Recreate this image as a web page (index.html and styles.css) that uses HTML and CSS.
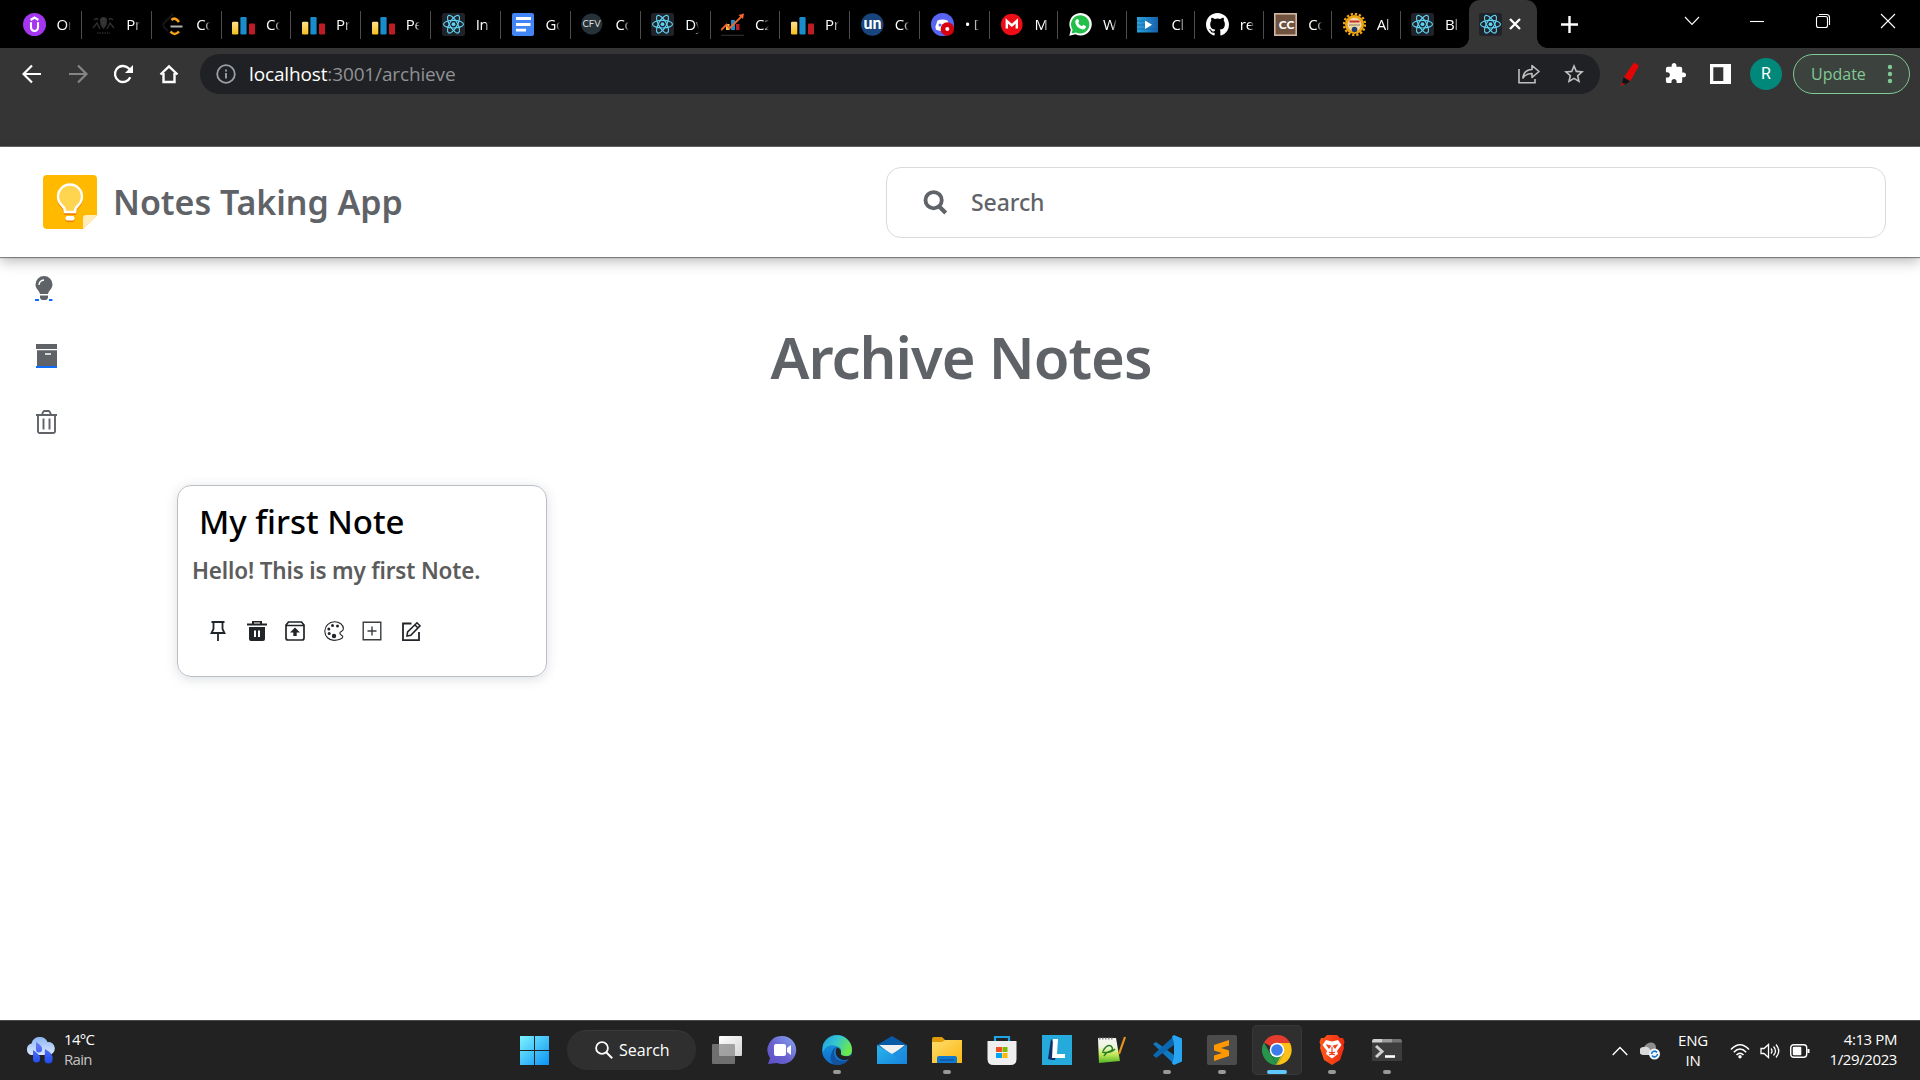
FILE: index.html
```html
<!DOCTYPE html>
<html lang="en">
<head>
<meta charset="utf-8">
<title>Notes Taking App</title>
<link rel="stylesheet" href="styles.css">
</head>
<body>
<svg class="defs" aria-hidden="true">
  <defs>
    <linearGradient id="g-yellow" x1="0" y1="0" x2="0" y2="1"><stop offset="0" stop-color="#ffe08a"/><stop offset="1" stop-color="#f5bd1f"/></linearGradient>
    <linearGradient id="g-win" x1="0" y1="0" x2="1" y2="1"><stop offset="0" stop-color="#7df3ff"/><stop offset="1" stop-color="#0a93f5"/></linearGradient>
    <linearGradient id="g-cloud" x1="0" y1="0" x2="0" y2="1"><stop offset="0" stop-color="#8db5f5"/><stop offset="1" stop-color="#dbe7fb"/></linearGradient>
    <linearGradient id="g-drop" x1="0" y1="0" x2="0" y2="1"><stop offset="0" stop-color="#6a7df5"/><stop offset="1" stop-color="#1d4df0"/></linearGradient>
    <linearGradient id="g-task" x1="0" y1="0" x2="1" y2="1"><stop offset="0" stop-color="#fff"/><stop offset="1" stop-color="#d4d4d4"/></linearGradient>
    <linearGradient id="g-chat" x1="0" y1="1" x2="1" y2="0"><stop offset="0" stop-color="#5b50c8"/><stop offset=".45" stop-color="#6b62cf"/><stop offset="1" stop-color="#86a6f2"/></linearGradient>
    <linearGradient id="g-edge" x1="0" y1="0" x2="1" y2=".4"><stop offset="0" stop-color="#1c9fe0"/><stop offset=".5" stop-color="#35c6d0"/><stop offset="1" stop-color="#6be84a"/></linearGradient>
    <linearGradient id="g-edge2" x1="0" y1="0" x2="0" y2="1"><stop offset="0" stop-color="#1ba0e6"/><stop offset="1" stop-color="#0c6bc9"/></linearGradient>
    <linearGradient id="g-mail" x1="0" y1="0" x2="1" y2="1"><stop offset="0" stop-color="#2bb6ec"/><stop offset="1" stop-color="#1583dc"/></linearGradient>
    <linearGradient id="g-folder" x1="0" y1="0" x2="1" y2="1"><stop offset="0" stop-color="#ffdc6e"/><stop offset="1" stop-color="#fbb70f"/></linearGradient>
    <linearGradient id="g-brave" x1="0" y1="0" x2="1" y2="0"><stop offset="0" stop-color="#ff5a1a"/><stop offset="1" stop-color="#f02a12"/></linearGradient>
    <linearGradient id="g-npp" x1="0" y1="0" x2="0" y2="1"><stop offset="0" stop-color="#f6f6f4"/><stop offset=".35" stop-color="#eef5df"/><stop offset=".65" stop-color="#c3e85a"/><stop offset="1" stop-color="#52b524"/></linearGradient>
    <linearGradient id="g-clip" x1="0" y1="0" x2="1" y2="0"><stop offset="0" stop-color="#29a4dd"/><stop offset="1" stop-color="#1660ae"/></linearGradient>
  </defs>
  <symbol id="react" viewBox="0 0 23 23"><rect width="23" height="23" rx="2.5" fill="#20232a"/><g fill="none" stroke="#5fd3f3" stroke-width="1.15"><ellipse cx="11.5" cy="11.2" rx="10" ry="3.8"/><ellipse cx="11.5" cy="11.2" rx="10" ry="3.8" transform="rotate(60 11.5 11.2)"/><ellipse cx="11.5" cy="11.2" rx="10" ry="3.8" transform="rotate(120 11.5 11.2)"/></g><circle cx="11.5" cy="11.2" r="1.9" fill="#5fd3f3"/></symbol>
  <symbol id="bars" viewBox="0 0 23 23"><rect y="8.8" width="6.3" height="12.7" rx="1.2" fill="url(#g-yellow)"/><rect x="8.4" y="4" width="6.2" height="17.5" rx="1.2" fill="#1b8ccb"/><rect x="17" y="10.5" width="6" height="11" rx="1.2" fill="#bd1c25"/></symbol>
</svg>

<header class="tabstrip">
  <div class="tab"><svg class="fav" viewBox="0 0 23 23"><circle cx="11.5" cy="11.5" r="11.5" fill="#a435f0"/><path d="M7.600 7l3.900-2.400L15.400 7M8 9.300v5.200a3.500 3.500 0 0 0 7 0V9.300" fill="none" stroke="#fff" stroke-width="2.100"/></svg><span class="tab-title">On</span></div>
  <div class="tab"><svg class="fav" viewBox="0 0 23 23"><path d="M8 6q3.500-4 7 0l-.5 6-3 4-3-4z" fill="#363636"/><path d="M8 8h7M9 11l2.500 2 2.500-2M2 7q3-3 4 0M21 7q-3-3-4 0M1 15l4-5 3 6M22 15l-4-5-3 6" fill="none" stroke="#303030" stroke-width="1.300"/><path d="M5 20h13" stroke="#2a2a2a" stroke-width="1.500" stroke-dasharray="1.500 1"/></svg><span class="tab-title">Pro</span></div>
  <div class="tab"><svg class="fav" viewBox="0 0 23 23"><path d="M11 1L2 10q-1.500 2 0 4l4 4" fill="none" stroke="#151515" stroke-width="2.200"/><path d="M9.500 7q3.500-3.500 7.500 2M8.500 18.500q4 5 8.500 0" fill="none" stroke="#f6a01c" stroke-width="2.600"/><path d="M8.500 13.500H20.500" stroke="#b3b3b3" stroke-width="2"/></svg><span class="tab-title">Co</span></div>
  <div class="tab"><svg class="fav"><use href="#bars"/></svg><span class="tab-title">Co</span></div>
  <div class="tab"><svg class="fav"><use href="#bars"/></svg><span class="tab-title">Pro</span></div>
  <div class="tab"><svg class="fav"><use href="#bars"/></svg><span class="tab-title">Pe</span></div>
  <div class="tab"><svg class="fav"><use href="#react"/></svg><span class="tab-title">Int</span></div>
  <div class="tab"><svg class="fav" viewBox="0 0 23 23"><rect width="22" height="23" rx="2" fill="#4285f4"/><path d="M4 5.500h15M4 11.500h14.500M4 17.200h10" stroke="#fff" stroke-width="2.800"/></svg><span class="tab-title">Go</span></div>
  <div class="tab"><svg class="fav" viewBox="0 0 23 23"><circle cx="10.800" cy="11" r="10.600" fill="#263238"/><text x="10.500" y="14.300" class="cfv">CFV</text></svg><span class="tab-title">Co</span></div>
  <div class="tab"><svg class="fav"><use href="#react"/></svg><span class="tab-title">Dy</span></div>
  <div class="tab"><svg class="fav" viewBox="0 0 23 23"><path d="M5 11h3.500v6H5z" fill="#f4c842"/><path d="M10 7h4v10h-4z" fill="#1b8ccb"/><path d="M15 11h3.500v6H15z" fill="#bd1c25"/><path d="M0 17l5.500-5.500 3 4L21 3" fill="none" stroke="#f2662f" stroke-width="1.800"/><path d="M17.500 2L23 .5l-1 5.500z" fill="#f2662f"/><path d="M0 22.300h23" stroke="#333"/></svg><span class="tab-title">C2</span></div>
  <div class="tab"><svg class="fav"><use href="#bars"/></svg><span class="tab-title">Pro</span></div>
  <div class="tab"><svg class="fav" viewBox="0 0 23 23"><circle cx="11.300" cy="11.500" r="11.300" fill="#18457b"/><text x="11.500" y="16.300" class="un">un</text></svg><span class="tab-title">Co</span></div>
  <div class="tab"><svg class="fav" viewBox="0 0 23 23"><circle cx="11.500" cy="11.500" r="11.500" fill="#5865f2"/><path d="M6.500 7.500q5-2.200 10 0l2.200 6-1 3.500-3.200.8h-6l-3.500-1-.6-3z" fill="#fff"/><circle cx="9" cy="12" r="1.500" fill="#5865f2"/><circle cx="16.300" cy="16" r="6.700" fill="#d9000d"/><circle cx="16.300" cy="16" r="2" fill="#fff"/></svg><span class="tab-title">• D</span></div>
  <div class="tab tab-b"><svg class="fav" viewBox="0 0 23 23"><circle cx="10.800" cy="11.500" r="10.800" fill="#ed0d16"/><path d="M5.800 15.500V8l5 4.500 5-4.500v7.500" fill="none" stroke="#fff" stroke-width="2.400"/></svg><span class="tab-title">ME</span></div>
  <div class="tab tab-b"><svg class="fav" viewBox="0 0 23 23"><path d="M.3 22.700l1.500-6A11.200 11.200 0 1 1 6.500 21.200z" fill="#fff"/><path d="M2.600 20.400l1-3.800A9.200 9.200 0 1 1 7 19.600z" fill="#22c04a"/><path d="M7.500 6.200q1.500-.8 2 .6l.7 1.800-1 1.500q1.300 2.400 3.800 3.200l1.300-1.500 2.700 1.400q0 3-3.300 3.200-6.200-1-7.500-7.200 0-2 1.300-3z" fill="#fff"/></svg><span class="tab-title">Wh</span></div>
  <div class="tab tab-b"><svg class="fav" viewBox="0 0 23 23"><rect y="4" width="21" height="15.500" fill="url(#g-clip)"/><path d="M0 8h12M0 12h12M0 16h21" stroke="#0c5ea0" stroke-width=".7"/><path d="M8 7.500l7 4.200-7 4.300z" fill="#fff"/></svg><span class="tab-title">Cla</span></div>
  <div class="tab tab-b"><svg class="fav" viewBox="0 0 16 16"><path fill="#fff" d="M8 0C3.580 0 0 3.580 0 8c0 3.540 2.290 6.530 5.470 7.590.4.070.55-.17.55-.38 0-.19-.01-.82-.01-1.490-2.010.37-2.530-.49-2.690-.94-.09-.23-.48-.94-.82-1.130-.28-.15-.68-.52-.01-.53.63-.01 1.080.58 1.230.82.72 1.210 1.870.87 2.330.66.07-.52.28-.87.51-1.070-1.780-.2-3.640-.89-3.640-3.950 0-.87.31-1.590.82-2.150-.08-.2-.36-1.020.08-2.120 0 0 .67-.21 2.200.82a7.600 7.600 0 0 1 4 0c1.530-1.040 2.200-.82 2.200-.82.44 1.100.16 1.920.08 2.120.51.56.82 1.270.82 2.150 0 3.070-1.870 3.750-3.650 3.950.29.25.54.73.54 1.480 0 1.070-.01 1.930-.01 2.200 0 .21.15.46.55.38A8.010 8.010 0 0 0 16 8c0-4.420-3.580-8-8-8z"/></svg><span class="tab-title">re</span></div>
  <div class="tab tab-b"><svg class="fav" viewBox="0 0 23 23"><rect x=".8" y=".8" width="21.400" height="21.400" fill="#70533f" stroke="#d9c2ac" stroke-width="1.500"/><text x="12.500" y="15.800" class="cc">CC</text></svg><span class="tab-title">Co</span></div>
  <div class="tab tab-b"><svg class="fav" viewBox="0 0 23 23"><circle cx="11.500" cy="11.500" r="10.500" fill="none" stroke="#f0a514" stroke-width="2.400" stroke-dasharray="2.300 1.820"/><circle cx="11.500" cy="11.500" r="9.500" fill="#f0a514"/><circle cx="11.500" cy="11.500" r="6.800" fill="#efd9a8"/><path d="M6.500 8.500h10" stroke="#c4342c" stroke-width="2"/><path d="M6 12h11" stroke="#8c7d66"/><circle cx="11.500" cy="16.500" r="2.800" fill="#23396e"/></svg><span class="tab-title">Al</span></div>
  <div class="tab tab-b last"><svg class="fav"><use href="#react"/></svg><span class="tab-title">Blo</span></div>
  <div class="tab tab-b active"><svg class="fav"><use href="#react"/></svg><svg class="tab-close" viewBox="0 0 12 12"><path d="M1 1l10 10M11 1L1 11" stroke="#fff" stroke-width="2.300"/></svg></div>
  <svg class="new-tab" viewBox="0 0 17 17"><path d="M8.500 0v17M0 8.500h17" stroke="#fff" stroke-width="2.400"/></svg>
  <div class="window-controls">
    <svg viewBox="0 0 16 16"><path d="M1 4l7 7.500L15 4"/></svg>
    <svg viewBox="0 0 16 16"><path d="M1 8.500h14"/></svg>
    <svg viewBox="0 0 16 16"><rect x="1.500" y="3.500" width="11" height="11" rx="2"/><path d="M4 1.500h7.500a3 3 0 0 1 3 3V12"/></svg>
    <svg viewBox="0 0 16 16"><path d="M1 1l14 14M15 1L1 15"/></svg>
  </div>
</header>

<nav class="toolbar">
  <div class="nav-buttons">
    <svg viewBox="0 0 20 20"><path d="M19 10H2M10 1.500L1.500 10l8.500 8.500" fill="none" stroke="#fff" stroke-width="2.200"/></svg>
    <svg viewBox="0 0 20 20"><path d="M1 10h17M10 1.500l8.500 8.500-8.500 8.500" fill="none" stroke="#858585" stroke-width="2.200"/></svg>
    <svg viewBox="0 0 20 20"><path d="M17.300 13.200A8 8 0 1 1 15.500 4.200L17.800 6.500" fill="none" stroke="#fff" stroke-width="2.300"/><path d="M20 1v8h-8z" fill="#fff"/></svg>
    <svg viewBox="0 0 20 20"><path d="M1.500 10.500L10 2.500l8.500 8M4.500 9v9h11V9" fill="none" stroke="#fff" stroke-width="2.400"/></svg>
  </div>
  <div class="omnibox">
    <svg class="info" viewBox="0 0 20 20"><circle cx="10" cy="10" r="8.800" fill="none" stroke="#9aa0a6" stroke-width="1.800"/><path d="M10 9v5.500M10 5.500v2" stroke="#9aa0a6" stroke-width="1.900"/></svg>
    <span class="url"><b>localhost</b>:3001/archieve</span>
    <svg class="share" viewBox="0 0 22 20"><path d="M1 5v13.800h16V15" fill="none" stroke="#c0c0c0" stroke-width="1.600"/><path d="M5 14q.5-8 9-8.500V1.500L21 7.500l-7 6v-4Q8 9.300 5 14z" fill="none" stroke="#c0c0c0" stroke-width="1.600" stroke-linejoin="round"/></svg>
    <svg class="star" viewBox="0 0 24 24"><path fill="#c0c0c0" d="M22 9.240l-7.190-.62L12 2 9.190 8.630 2 9.240l5.460 4.730L5.820 21 12 17.270 18.180 21l-1.630-7.030L22 9.240zM12 15.400l-3.760 2.270 1-4.280-3.320-2.880 4.380-.38L12 6.100l1.710 4.040 4.380.38-3.320 2.880 1 4.280L12 15.400z"/></svg>
  </div>
  <svg class="pen" viewBox="0 0 20 24"><path d="M14 .5l5 3L10.500 19l-6.500-4z" fill="#e60505"/><path d="M3.500 15.500l6.500 4-5 3H2z" fill="#111"/><path d="M1.500 21.500h4L1 24z" fill="#e60505"/></svg>
  <svg class="puzzle" viewBox="0 0 24 24"><path fill="#fff" d="M20.500 11H19V7c0-1.100-.9-2-2-2h-4V3.500C13 2.120 11.880 1 10.500 1S8 2.120 8 3.500V5H4c-1.100 0-1.990.9-1.990 2v3.800H3.500c1.490 0 2.700 1.210 2.700 2.700s-1.210 2.700-2.700 2.700H2V20c0 1.100.9 2 2 2h3.800v-1.500c0-1.490 1.210-2.700 2.700-2.700 1.490 0 2.700 1.210 2.700 2.700V22H17c1.100 0 2-.9 2-2v-4h1.500c1.380 0 2.500-1.120 2.500-2.500S21.880 11 20.500 11z"/></svg>
  <svg class="panel" viewBox="0 0 21 20"><path fill="#fff" fill-rule="evenodd" d="M0 0h21v20H0zM3.300 3.300v13.600h10V3.300z"/></svg>
  <span class="avatar">R</span>
  <div class="update"><span class="update-label">Update</span><svg viewBox="0 0 6 20"><g fill="#81c995"><circle cx="3" cy="3" r="2.200"/><circle cx="3" cy="10" r="2.200"/><circle cx="3" cy="17" r="2.200"/></g></svg></div>
</nav>

<main class="app">
  <div class="navbar">
    <svg class="logo" viewBox="0 0 54 54"><path d="M4 0h46q4 0 4 4v36L40 54H4q-4 0-4-4V4q0-4 4-4z" fill="#ffba00"/><path d="M54 40L40 54V43q0-3 3-3z" fill="#ffecb8"/><path d="M22 38q0-4-3-7a12 12 0 1 1 16 0q-3 3-3 7z" fill="#ffd54f" stroke="#ee8100" stroke-width="2.200" transform="translate(0 .9)"/><path d="M22 37q0-4-3-6.500a12 12 0 1 1 16 0q-3 2.500-3 6.500z" fill="#ffd54f" stroke="#fff" stroke-width="2.400"/><rect x="22.500" y="42.500" width="9" height="4.500" rx="2" fill="#ee8100"/><rect x="22.500" y="41" width="9" height="4.500" rx="2" fill="#fff"/></svg>
    <span class="brand">Notes Taking App</span>
    <div class="search">
      <svg viewBox="0 0 23 24"><circle cx="9.700" cy="9.800" r="7.800" fill="none" stroke="#5f6368" stroke-width="3.700"/><path d="M15.300 16l6 6" stroke="#5f6368" stroke-width="4"/></svg>
      <span class="search-text">Search</span>
    </div>
  </div>
  <div class="content">
    <aside class="sidebar">
      <a class="side-link bulb-link"><svg viewBox="0 0 18 25"><path d="M9 0a8.500 8.500 0 0 1 8.500 8.500c0 4.500-3.700 5.500-4.500 9.500H5C4.200 14 .5 13 .5 8.500A8.500 8.500 0 0 1 9 0z" fill="#5f6368"/><path d="M5 19.500h8v2q-.5 2.500-2.500 2.500h-3Q5.500 24 5 21.500z" fill="#5f6368"/><path d="M4 9q.3-4.500 5-5" fill="none" stroke="#fff" stroke-width="1.300"/><path d="M0 24h4M14 24h3.500" stroke="#0d6efd" stroke-width="2"/></svg></a>
      <a class="side-link box-link"><svg viewBox="0 0 21 24"><path d="M0 0h21v5H0zM1 6.200h20V22H1z" fill="#5f6368"/><path d="M9 10h6" stroke="#fff" stroke-width="1.500"/><path d="M0 23h21" stroke="#0d6efd" stroke-width="2"/></svg></a>
      <a class="side-link trash-link"><svg viewBox="0 0 21 24"><path d="M0 5h21M6 5q1-4 2.500-4h4Q14 1 15 5M2 5v16.500q0 1.500 1.500 1.500h14q1.500 0 1.500-1.500V5M7.500 8.500v11M13.500 8.500v11" fill="none" stroke="#5f6368" stroke-width="1.900"/></svg></a>
    </aside>
    <section class="notes">
      <h1>Archive Notes</h1>
      <article class="note">
        <h2>My first Note</h2>
        <p>Hello! This is my first Note.</p>
        <div class="note-actions">
          <svg viewBox="0 0 20 20"><path d="M3.500 1h13M5.500 1v7L3.500 12h13L14.500 8V1M10 12v8.500" fill="none" stroke="#212529" stroke-width="1.800"/></svg>
          <svg viewBox="0 0 20 20"><path fill="#212529" fill-rule="evenodd" d="M5 0h10v2.500h5v2H0v-2h5zM7 1.500v1h6v-1zM2 6h16v12q0 2-2 2H4q-2 0-2-2zM7 9.500v6.500h2V9.500zm4 0v6.500h2V9.500z"/></svg>
          <svg viewBox="0 0 20 20"><path d="M3.500 1h13L19 4v13q0 2-2 2H3q-2 0-2-2V4zM1 4.500h18" fill="none" stroke="#212529" stroke-width="1.700"/><path d="M10 6.500l5 5h-3.300V15H8.300v-3.500H5z" fill="#212529"/></svg>
          <svg viewBox="0 0 20 20"><path d="M10.500.8C5 .8.800 5 .800 10.200S5 19.400 10 19.400c4.200 0 8.800-1.700 8.800-3.600 0-1.500-3-1.700-3-3.700 0-1.700 3.600-1.500 3.600-4.300C19.400 3.500 15.500.8 10.500.8z" fill="none" stroke="#212529" stroke-width="1.100"/><g fill="#212529"><circle cx="8.500" cy="4.500" r="1.500"/><circle cx="13.500" cy="5" r="1.500"/><circle cx="4.800" cy="8" r="1.500"/><circle cx="5.200" cy="12.500" r="1.500"/><circle cx="10" cy="15" r="2.200"/></g></svg>
          <svg viewBox="0 0 20 20"><path d="M1.200 1.200h17.600v17.600H1.200zM5.500 10h9M10 5.500v9" fill="none" stroke="#3a3d40" stroke-width="1.400"/></svg>
          <svg viewBox="0 0 20 20"><path d="M10.500 2.500H2v16.600h16V11" fill="none" stroke="#212529" stroke-width="1.800"/><path d="M6 15l.6-4L16 1.800l3 3L9.800 14.300zM14 4l3 3" fill="none" stroke="#212529" stroke-width="1.600"/></svg>
        </div>
      </article>
    </section>
  </div>
</main>

<footer class="taskbar">
  <div class="weather">
    <svg viewBox="0 0 30 28"><path d="M6 19a6 6 0 0 1 .5-11.500A8.500 8.500 0 0 1 22.500 6 6.500 6.500 0 0 1 24 19z" fill="url(#g-cloud)"/><path d="M11 6q7 4 6 7.500a3 3 0 0 1-6 0zM8 14q8 5 7 9a3.500 3.500 0 0 1-7 0zM20 13q9 5 7.500 10.500a4 4 0 0 1-8 0z" fill="url(#g-drop)"/></svg>
    <div class="weather-text"><span>14°C</span><span class="dim">Rain</span></div>
  </div>
  <div class="dock">
    <div class="app-slot"><svg viewBox="0 0 30 30"><path fill="url(#g-win)" d="M1 1h14v14H1zM16 1h14v14H16zM1 16h14v14H1zM16 16h14v14H16z"/></svg></div>
    <div class="task-search"><svg viewBox="0 0 18 18"><circle cx="7" cy="7" r="5.900" fill="none" stroke="#fff" stroke-width="1.800"/><path d="M11.200 11.200l6 6" stroke="#fff" stroke-width="2"/></svg><span>Search</span></div>
    <div class="app-slot"><svg viewBox="0 0 30 30"><rect x="7" y="1" width="23" height="20" rx="1" fill="url(#g-task)"/><rect y="9" width="23" height="20" rx="1" fill="#8a8a8a" fill-opacity=".75"/></svg></div>
    <div class="app-slot"><svg viewBox="0 0 30 30"><path d="M15 1a14 14 0 1 1-5 27L1 29l2-6A14 14 0 0 1 15 1z" fill="url(#g-chat)"/><rect x="7" y="9" width="12" height="12" rx="2" fill="#fff"/><path d="M20 13l4-3v10l-4-3z" fill="#fff"/></svg></div>
    <div class="app-slot run"><svg viewBox="0 0 30 30"><circle cx="15" cy="15" r="15" fill="url(#g-edge2)"/><path d="M1 10A15 15 0 0 1 30 15q0 6-6 6-6 0-5-3 1-6-5-7Q5 8 1 17z" fill="url(#g-edge)"/><path d="M12 17q0 9 9 9 4 0 6-2-5 7-14 6Q6 26 10 17q1-4 5-5-3 2-3 5z" fill="#12529f"/><path d="M15 12.500q4 1 4 5-1 2.500 3 3.500 4 1 7-1l-1.500 4q-9 3-13-3.500-2-4 .5-8z" fill="#222"/></svg></div>
    <div class="app-slot"><svg viewBox="0 0 30 30"><path d="M0 10L15 1l15 9v6H0z" fill="#0859a8"/><path d="M2 10h26L15 20z" fill="#f0f0f0"/><path d="M0 10l15 9 15-9v19H0z" fill="url(#g-mail)"/><path d="M15 19l15-9v19z" fill="#1b86e0" fill-opacity=".4"/></svg></div>
    <div class="app-slot run"><svg viewBox="0 0 30 30"><path d="M0 4q0-2 2-2h8l3 3v6H0z" fill="#e09b0b"/><path d="M0 7h10l3-2h17v23H0z" fill="url(#g-folder)"/><path d="M5 28v-5q0-2 2-2h16q2 0 2 2v5z" fill="#0f78d0"/><path d="M8 25h14" stroke="#0a4f96" stroke-width="1.200"/></svg></div>
    <div class="app-slot"><svg viewBox="0 0 30 30"><path d="M8 6V2h14v4" fill="none" stroke="#1fa5e6" stroke-width="2.200"/><path d="M.5 6h29v18q0 6-6 6h-17q-6 0-6-6z" fill="#efefef"/><path d="M9 12h6v5H9z" fill="#f25022"/><path d="M15.500 12h5v5h-5z" fill="#7fba00"/><path d="M9 18h6v5H9z" fill="#00a4ef"/><path d="M15.500 18h5v5h-5z" fill="#ffb900"/></svg></div>
    <div class="app-slot"><svg viewBox="0 0 30 30"><path d="M0 0h30v30H0z" fill="#26a9db"/><path d="M9 4L6 24l4 1h3l2-12z" fill="#102f66"/><path d="M11 4h5l-1 15h8v4H10z" fill="#fff"/></svg></div>
    <div class="app-slot"><svg viewBox="0 0 30 30"><path d="M1 3h18l4 23-21 2z" fill="url(#g-npp)"/><path d="M2 3.500h15" stroke="#888" stroke-dasharray="1.500 1.500" stroke-width="2"/><path d="M6 16q4-7 8-5 3 3 0 5-5 1-7 5m-2-4q8 2 13-3" fill="none" stroke="#267b23" stroke-width="1.500"/><path d="M22 19l6-17" stroke="#e89420" stroke-width="2.200"/></svg></div>
    <div class="app-slot run"><svg viewBox="0 0 30 30"><path d="M1 9l3-2 18 13v9z" fill="#1079c4"/><path d="M1 20l3 3L22 10V1z" fill="#0b68b0"/><path d="M22 0l8 3.500v23L22 30l-2-1.500 2-6.500V8l-2-6.500z" fill="#27a5f2"/></svg></div>
    <div class="app-slot run"><svg viewBox="0 0 30 30"><rect width="30" height="30" rx="2" fill="#4c4c4c"/><path d="M7 10l15-5v5.500l-8 2.500 8 2.500V21L7 26v-5.500l8-2.500-8-2.500z" fill="#ff9800"/></svg></div>
    <div class="app-slot run current"><svg viewBox="0 0 30 30"><path d="M15 15L2 7.500A15 15 0 0 1 28 7.500z" fill="#e33b2e"/><path d="M15 8h13a15 15 0 0 1-13 22l6.500-11z" fill="#fbc116"/><path d="M2 7.500L8.500 19 15 30A15 15 0 0 1 2 7.500z" fill="#28964a"/><path d="M8.500 18.700L15 15l6.500 3.700L15 30z" fill="#28964a"/><path d="M21.500 18.700L15 30l-1 0 5-9z" fill="#fbc116"/><circle cx="15" cy="15" r="7.300" fill="#fff"/><circle cx="15" cy="15" r="5.800" fill="#3b7ded"/></svg></div>
    <div class="app-slot run"><svg viewBox="0 0 30 30"><path d="M10 0h10l3 3 3 0 1.500 4-1 3 .5 3-4 12-8 5-8-5-4-12 .5-3-1-3L4 3h3z" fill="url(#g-brave)"/><path d="M9 5l6 1.500L21 5l3.500 5-4.500 6 1 3-6 4.500L9 19l1-3-4.500-6z" fill="#fff"/><path d="M10 10l3.500 1L12 13zM20 10l-3.500 1 1.500 2zM15 12v5M12 17l3 1.500 3-1.500M12 20l3-1 3 1" fill="#f3401b" stroke="#f3401b" stroke-width="1.200"/></svg></div>
    <div class="app-slot run"><svg viewBox="0 0 30 30"><path d="M0 6q0-2 2-2h26q2 0 2 2v20H0z" fill="#3c3c3c"/><path d="M0 7q0-3 2-3h8v3.500H0z" fill="#d0d0d0"/><path d="M10 4h10v3.500H10z" fill="#9b9b9b"/><path d="M20 4h8q2 0 2 3.500H20z" fill="#737373"/><path d="M4 11l6 5.500L4 22" fill="none" stroke="#cfcfcf" stroke-width="3"/><path d="M13 21.500h10" stroke="#fff" stroke-width="2.600"/></svg></div>
  </div>
  <div class="tray">
    <svg class="chev" viewBox="0 0 16 10"><path d="M.7 9L8 1.500 15.300 9" fill="none" stroke="#fff" stroke-width="1.400"/></svg>
    <svg class="cloud" viewBox="0 0 20 18"><path d="M3 12a4 4 0 0 1 1-7Q7 0 12 .500q4 1 4 5l-2 7z" fill="#8d8d8d"/><path d="M3 13a4 4 0 0 1 1-8q3-1 5 1l4 7z" fill="#d9d9d9"/><circle cx="14.500" cy="12" r="5.500" fill="#f4f9fd"/><path d="M11.500 12a3 3 0 0 1 5.500-1.500M17.500 12a3 3 0 0 1-5.500 1.500" fill="none" stroke="#1475cc" stroke-width="1.500"/></svg>
    <div class="lang"><span>ENG</span><span>IN</span></div>
    <svg class="wifi" viewBox="0 0 20 16"><path d="M1 6.500q9-9.500 18 0M3.800 9.200q6.200-6.500 12.400 0M6.500 12q3.500-3.700 7 0" fill="none" stroke="#fff" stroke-width="1.500"/><circle cx="10" cy="13.700" r="1.700" fill="#fff"/></svg>
    <svg class="sound" viewBox="0 0 20 16"><path d="M1 5.500h3L8.500 1.500v13L4 10.500H1zM11 5.500q2 2.500 0 5M13.500 3.500q4 4.500 0 9M16 1.500q5.500 6.500 0 13" fill="none" stroke="#fff" stroke-width="1.300"/></svg>
    <svg class="battery" viewBox="0 0 20 14"><rect x=".7" y=".7" width="16" height="12.600" rx="3" fill="none" stroke="#fff" stroke-width="1.400"/><rect x="2.800" y="2.800" width="8.500" height="8.400" rx="1" fill="#fff"/><path d="M18.500 5v4" stroke="#fff" stroke-width="2"/></svg>
    <div class="clock"><span>4:13 PM</span><span>1/29/2023</span></div>
  </div>
</footer>
</body>
</html>
```
FILE: styles.css
```css
* { box-sizing: border-box; }

body {
  margin: 0;
  width: 1920px;
  height: 1080px;
  display: flex;
  flex-direction: column;
  overflow: hidden;
  background: #fff;
  font-family: "Noto Sans", "Open Sans", sans-serif;
}

svg { display: block; flex: none; }
.defs { position: absolute; width: 0; height: 0; }

/* Tab strip */
.tabstrip {
  display: flex;
  height: 48px;
  flex: none;
  padding-left: 12px;
  background: #000;
}
.tab {
  display: flex;
  align-items: center;
  gap: 11px;
  width: 69.86px;
  height: 48px;
  flex: none;
  padding-left: 10.500px;
  background: linear-gradient(#4d4d4d, #4d4d4d) right 11px / 1px 28px no-repeat;
}
.tab-b { width: 68.430px; }
.tab.last { background: none; }
.tab.active {
  position: relative;
  gap: 7px;
  background: #353535;
  border-radius: 11px 11px 0 0;
}
.tab.active::before,
.tab.active::after {
  content: "";
  position: absolute;
  bottom: 0;
  width: 10px;
  height: 10px;
}
.tab.active::before {
  left: -10px;
  background: radial-gradient(circle at 0 0, #000 9.5px, #353535 10px);
}
.tab.active::after {
  right: -10px;
  background: radial-gradient(circle at 100% 0, #000 9.5px, #353535 10px);
}
.fav { width: 23px; height: 23px; }
.cfv, .un, .cc { font-family: Lato, sans-serif; text-anchor: middle; fill: #fff; }
.cfv { font-size: 9.500px; fill: #ddd; }
.un { font-size: 16px; font-weight: 900; }
.cc { font-size: 12px; font-weight: 900; }
.tab-title {
  width: 14px;
  overflow: hidden;
  white-space: nowrap;
  color: #fff;
  font: 15px/20px "Open Sans", sans-serif;
  letter-spacing: -.3px;
  -webkit-mask-image: linear-gradient(90deg, #000 65%, transparent);
  mask-image: linear-gradient(90deg, #000 65%, transparent);
}
.tab-close { width: 12px; height: 12px; }
.new-tab { width: 17px; height: 17px; margin: 16px 0 0 24px; }
.window-controls {
  display: flex;
  gap: 49.500px;
  margin: 13px 24px 0 auto;
}
.window-controls svg {
  width: 16px;
  height: 16px;
  fill: none;
  stroke: #fff;
  stroke-width: 1.1;
}

/* Toolbar */
.toolbar {
  display: flex;
  align-items: center;
  height: 99px;
  flex: none;
  padding: 0 10px 47px 22px;
  background: #353535;
  border-bottom: 1px solid #666;
}
.nav-buttons { display: flex; gap: 25.500px; margin-right: 21.500px; }
.nav-buttons svg { width: 20px; height: 20px; }
.omnibox {
  display: flex;
  align-items: center;
  width: 1400px;
  height: 40px;
  padding: 0 14px 0 16px;
  border-radius: 20px;
  background: #202124;
}
.info { width: 20px; height: 20px; margin-right: 13px; }
.url { color: #8f9296; font: 19px/26px "Open Sans", sans-serif; letter-spacing: -.14px; }
.url b { color: #fff; font-weight: 400; }
.share { width: 22px; height: 20px; margin-left: auto; }
.star { width: 24px; height: 24px; margin-left: 22px; }
.pen { width: 20px; height: 24px; margin-left: 20px; }
.puzzle { width: 23px; height: 23px; margin-left: 24px; }
.panel { width: 21px; height: 20px; margin-left: 23px; }
.avatar {
  width: 32px;
  height: 32px;
  margin-left: 19px;
  border-radius: 50%;
  background: #00897b;
  color: #fff;
  font: 16px/32px Roboto, sans-serif;
  text-align: center;
}
.update {
  display: flex;
  align-items: center;
  justify-content: space-between;
  width: 117px;
  height: 40px;
  margin-left: auto;
  padding: 0 16px 0 17px;
  border: 1px solid #81c995;
  border-radius: 20px;
  background: #3c433e;
}
.update-label { color: #81c995; font: 16px/22px "Open Sans", sans-serif; }
.update svg { width: 6px; height: 20px; }

/* Notes app */
.app { flex: 1; min-height: 0; display: flex; flex-direction: column; }
.navbar {
  display: flex;
  align-items: center;
  height: 110px;
  flex: none;
  padding: 0 34px 0 43px;
  background: #fff;
  box-shadow: 0 1px 1px rgba(0, 0, 0, .4), 0 5px 12px rgba(0, 0, 0, .25);
}
.logo { width: 54px; height: 54px; }
.brand {
  margin-left: 16px;
  color: #5f6368;
  font-size: 34px;
  font-weight: 600;
  line-height: 50px;
  letter-spacing: -.05px;
}
.search {
  display: flex;
  align-items: center;
  width: 1000px;
  height: 71px;
  margin-left: auto;
  padding-left: 36px;
  border: 1px solid #dadada;
  border-radius: 15px;
}
.search svg { width: 25px; height: 25px; }
.search-text { margin-left: 23px; color: #5f6368; font-size: 23px; font-weight: 500; line-height: 32px; letter-spacing: -.1px; }

.content { display: flex; padding-top: 19px; }
.sidebar {
  display: flex;
  flex-direction: column;
  width: 60px;
  padding-left: 35px;
}
.side-link { height: 24px; padding-left: 1px; }
.side-link svg { width: 21px; height: 24px; }
.bulb-link { padding-left: 0; }
.bulb-link svg { width: 18px; height: 25px; }
.box-link { margin-top: 44px; }
.trash-link { margin-top: 42px; }
.notes { flex: 1; }
h1 {
  margin: 43px 58px 0 0;
  color: #5f6368;
  font-size: 58px;
  font-weight: 600;
  line-height: 76px;
  letter-spacing: -1px;
  text-align: center;
}
.note {
  width: 370px;
  height: 192px;
  margin: 90px 0 0 117px;
  padding: 12px 14px;
  border: 1px solid #bcbfc6;
  border-radius: 14px;
  box-shadow: 0 2px 12px rgba(60, 70, 100, .18);
}
.note h2 { margin: 0 0 0 7px; font-size: 33px; font-weight: 500; line-height: 48px; color: #000; }
.note p {
  margin: 9px 0 0;
  font-size: 22.500px;
  font-weight: 600;
  line-height: 32px;
  letter-spacing: -.17px;
  color: #5c5c5c;
}
.note-actions { display: flex; gap: 18.600px; margin: 34px 0 0 16px; }
.note-actions svg { width: 20px; height: 20px; }

/* Taskbar */
.taskbar {
  display: grid;
  grid-template-columns: 509px 1fr 1fr;
  height: 60px;
  flex: none;
  background: #222;
  border-top: 1px solid #484a4a;
  color: #fff;
  font: 15px/20px "Open Sans", sans-serif;
}
.weather { display: flex; padding: 8px 0 0 25px; gap: 9px; }
.weather svg { width: 30px; height: 28px; margin-top: 7px; }
.weather-text, .lang, .clock { display: flex; flex-direction: column; letter-spacing: -.4px; }
.weather-text { letter-spacing: -.7px; }
.lang { letter-spacing: -.2px; }
.dim { color: #c4c4c4; }
.dock { display: flex; gap: 5px; padding-top: 4px; }
.app-slot {
  position: relative;
  width: 50px;
  height: 50px;
  flex: none;
  padding: 10px;
  border-radius: 5px;
}
.app-slot svg { width: 30px; height: 30px; }
.run::after {
  content: "";
  position: absolute;
  left: 21px;
  bottom: 1px;
  width: 8px;
  height: 4px;
  border-radius: 2px;
  background: #999;
}
.current { background: #2f2f2f; box-shadow: inset 0 0 0 1px #383838; }
.current::after { left: 15px; width: 20px; background: #5fc9ff; }
.task-search {
  display: flex;
  align-items: center;
  gap: 6px;
  width: 129px;
  height: 40px;
  flex: none;
  margin: 5px 1px 0 3px;
  padding: 0 0 2px 28px;
  border-radius: 20px;
  border-top: 1px solid #3a3a3a;
  background: #2f2f2f;
  font-size: 16px;
}
.task-search svg { width: 18px; height: 18px; }
.tray {
  display: flex;
  align-items: center;
  justify-content: flex-end;
  padding: 0 23px 0 0;
}
.chev { width: 16px; height: 10px; margin-right: 12px; }
.cloud { width: 20px; height: 18px; margin-right: 17px; }
.lang { width: 32px; margin: 0 21px 2px 0; align-items: center; }
.wifi { width: 20px; height: 16px; margin-right: 10px; }
.sound { width: 20px; height: 16px; margin-right: 10px; }
.battery { width: 20px; height: 14px; margin-right: 19px; }
.clock { width: 68px; margin-bottom: 3px; align-items: flex-end; white-space: nowrap; }
```
